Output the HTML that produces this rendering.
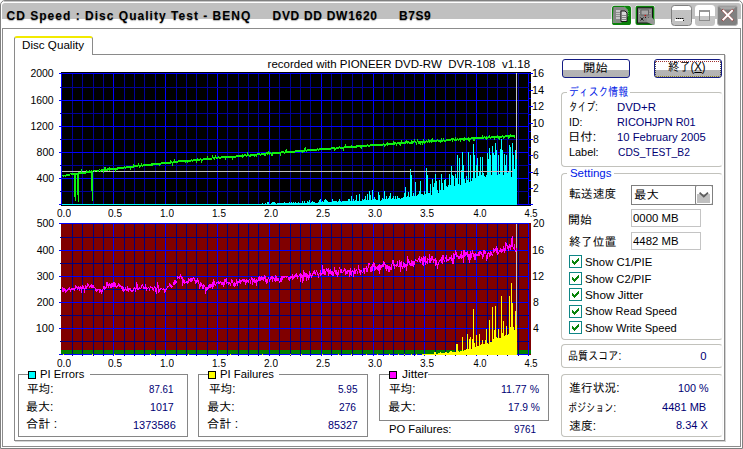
<!DOCTYPE html>
<html lang="ja"><head><meta charset="utf-8"><title>CD Speed : Disc Quality Test</title>
<style>
html,body{margin:0;padding:0;background:#fff;}
body{width:743px;height:449px;overflow:hidden;position:relative;font-family:"Liberation Sans","IPAGothic","Noto Sans CJK JP",sans-serif;font-size:11.5px;line-height:14px;color:#000;}
#win{position:absolute;left:0;top:0;width:741px;height:447px;border:1px solid #808080;border-radius:5px 5px 0 0;background:#fff;}
.abs,.t,.gb,.sb,.btn,.cb,.tb{position:absolute;box-sizing:content-box;}
.t{white-space:pre;height:14px;}
.t>span{display:inline-block;}
.ttl{text-shadow:0 1px 1px rgba(80,80,80,.45);}
#tbar{left:2px;top:3px;width:739px;height:16px;background:#c0c0c0;border-radius:3px 3px 0 0;}
#inner{left:2px;top:28px;width:737px;height:417px;border:1px solid #8c8c8c;}
#page{left:14px;top:54px;width:709px;height:385px;border:1px solid #8a8a8a;box-shadow:1px 1px 0 #d4d4d4;background:#fff;}
#tab{left:14px;top:36px;width:77px;height:17px;border:1px solid #8a8a8a;border-top:2px solid #f2ea00;border-bottom:none;border-radius:3px 3px 0 0;background:#fff;}
.gb{border:1px solid #c2c2bc;border-right-color:#f6f6f6;border-radius:4px;}
.sb{border:1px solid #868686;}
.lbg{background:#fff;}
.btn{border:1px solid #141c84;border-radius:3px;height:17px;width:66px;background:linear-gradient(#fff 0,#fff 58%,#b6b6b6 58%,#b2b2b2 100%);}
.tb{border:1px solid #c4c4c4;background:#fff;}
.cb{width:11px;height:11px;border:1px solid #0f8686;background:#fff;}
.sq{width:6px;height:6px;border:1px solid #000;}
.cj{-webkit-text-stroke:0.3px currentColor;}

</style></head>
<body>
<div id="win"></div>
<div class="abs" style="left:4px;top:1px;width:735px;height:1px;background:#c6c6c6"></div>
<div class="abs" id="tbar"></div>
<div class="abs" id="inner"></div>
<div class="abs" id="page"></div>
<div class="abs" id="tab"></div>

<!-- title bar icons -->
<svg class="abs" style="left:611px;top:5px" width="46" height="22" viewBox="0 0 46 22">
  <rect x="0.5" y="0.3" width="20" height="20.2" rx="3" fill="#fff"/>
  <rect x="1" y="0.8" width="19" height="19.2" rx="2.6" fill="#0a800a"/>
  <path d="M2.5 2h11.5l3 3v6.5l-7 6.5h-8.5z" fill="#868686"/>
  <path d="M3.2 15.5l2 1.8M13 1.6l3.5 3.4M17.2 6v5" stroke="#40e040" stroke-width="1" stroke-dasharray="1 1" fill="none"/>
  <rect x="5" y="5" width="4" height="9" fill="#c6c6c6"/>
  <path d="M5 7.5h4M5 9.5h4M5 11.5h4" stroke="#8a8a8a" stroke-width=".9"/>
  <path d="M10 6h4l2 2v8.5h-6z" fill="#d8d8d8" stroke="#181818" stroke-width="1"/>
  <path d="M11 10.5h4M11 12.5h4M11 14.5h4" stroke="#7a7a7a" stroke-width=".9"/>
  <rect x="24" y="0.3" width="20" height="20.2" rx="2.5" fill="#fff"/>
  <rect x="24.5" y="0.8" width="19" height="19.2" rx="2" fill="#0a800a"/>
  <rect x="26.5" y="2.8" width="15" height="15.2" fill="#888" stroke="#181818" stroke-width="1"/>
  <rect x="30" y="5" width="7.5" height="5" fill="#a6a6a6" stroke="#585858" stroke-width=".8"/>
  <path d="M28.5 5.5v5M39 5.5v5" stroke="#d8d8d8" stroke-width=".8" stroke-dasharray="1 1.5"/>
  <path d="M29.5 12.5l3 3M32.5 12.5l-3 3M34 12.5h1M37 12.5h1" stroke="#202020" stroke-width="1"/>
  <circle cx="34.3" cy="10.6" r=".8" fill="#d01010"/>
  <path d="M36.5 12.5h4.5l2.6 3v4.2l-1.6 .4-6.5-3.4z" fill="#989898"/>
</svg>
<!-- min / max / close -->
<div class="abs" style="left:671px;top:5px;width:19px;height:19px;border:1px solid #808080;border-radius:3.5px;background:linear-gradient(#fff 0,#fff 3.6px,#c2c2c2 3.6px,#c0c0c0 100%)"></div>
<div class="abs" style="left:676px;top:18px;width:8px;height:1px;background:repeating-linear-gradient(90deg,#111 0,#111 1px,#666 1px,#666 2px)"></div>
<div class="abs" style="left:675px;top:19px;width:8px;height:2px;background:#fff"></div>
<div class="abs" style="left:683px;top:20px;width:1px;height:1px;background:#111"></div>
<div class="abs" style="left:695px;top:5px;width:20px;height:21px;border-radius:3.5px;background:linear-gradient(#fff 0,#fff 10.6px,#c6c6c6 10.6px,#c4c4c4 100%)"></div>
<div class="abs" style="left:699px;top:10px;width:9px;height:8px;border:1px solid #8c8c8c;border-top:2px solid #989898;background:linear-gradient(#fff 0,#fff 3.6px,#c6c6c6 3.6px)"></div>
<div class="abs" style="left:717px;top:5px;width:19px;height:19px;border:1px solid #b2b2b2;border-radius:3px;background:#808080"></div>
<svg class="abs" style="left:717px;top:5px" width="21" height="21" viewBox="0 0 21 21"><path d="M1.5 1.2h18l-3.2 3.2h-11.6z" fill="#a8a8a8"/><path d="M5.2 4.6l11 11M16.2 4.6l-11 11" stroke="#8a1818" stroke-width="2.5"/><path d="M5.6 5l10.2 10.2M15.8 5l-10.2 10.2" stroke="#fff" stroke-width="2"/></svg>

<!-- buttons -->
<div class="btn" style="left:562px;top:59px"></div>
<div class="btn" style="left:654px;top:59px"></div>
<div class="abs" style="left:655px;top:61px;width:64px;height:14px;border:1px dotted #4a4a4a;border-top-color:#a03030;border-bottom-color:#8a8020"></div>

<!-- right group boxes -->
<div class="gb" style="left:561px;top:92px;width:160px;height:73px"></div>
<div class="abs lbg" style="left:567px;top:86px;width:63px;height:12px"></div>
<div class="gb" style="left:561px;top:173px;width:160px;height:165px"></div>
<div class="abs lbg" style="left:567px;top:168px;width:47px;height:11px"></div>
<div class="gb" style="left:561px;top:344px;width:160px;height:22px"></div>
<div class="gb" style="left:561px;top:374px;width:160px;height:61px"></div>

<!-- combo + text boxes -->
<div class="tb" style="left:631px;top:185px;width:80px;height:18px;border-color:#7f7f7f"></div>
<div class="abs" style="left:695px;top:185px;width:16px;height:18px;border:1px solid #808080;border-radius:2px;background:#fff"></div>
<div class="abs" style="left:697px;top:194px;width:13px;height:9px;background:#c0c0c0"></div>
<svg class="abs" style="left:695px;top:185px" width="18" height="20" viewBox="0 0 18 20"><path d="M4.6 7.6l4.2 4 4.2-4" fill="none" stroke="#5c5c5c" stroke-width="1.8"/></svg>
<div class="tb" style="left:631px;top:209px;width:68px;height:16px"></div>
<div class="tb" style="left:631px;top:232px;width:68px;height:16px"></div>

<!-- checkboxes -->
<div class="cb" style="left:569px;top:255px"></div>
<div class="cb" style="left:569px;top:272px"></div>
<div class="cb" style="left:569px;top:288px"></div>
<div class="cb" style="left:569px;top:305px"></div>
<div class="cb" style="left:569px;top:321px"></div>
<svg class="abs" style="left:569px;top:255px" width="13" height="80" viewBox="0 0 13 80" shape-rendering="crispEdges"><path d="M3 5h1v3h-1zM4 6h1v3h-1zM5 7h1v3h-1zM6 6h1v3h-1zM7 5h1v3h-1zM8 4h1v3h-1zM9 3h1v3h-1zM3 22h1v3h-1zM4 23h1v3h-1zM5 24h1v3h-1zM6 23h1v3h-1zM7 22h1v3h-1zM8 21h1v3h-1zM9 20h1v3h-1zM3 38h1v3h-1zM4 39h1v3h-1zM5 40h1v3h-1zM6 39h1v3h-1zM7 38h1v3h-1zM8 37h1v3h-1zM9 36h1v3h-1zM3 55h1v3h-1zM4 56h1v3h-1zM5 57h1v3h-1zM6 56h1v3h-1zM7 55h1v3h-1zM8 54h1v3h-1zM9 53h1v3h-1zM3 71h1v3h-1zM4 72h1v3h-1zM5 73h1v3h-1zM6 72h1v3h-1zM7 71h1v3h-1zM8 70h1v3h-1zM9 69h1v3h-1z" fill="#0a840a"/></svg>

<!-- bottom group boxes -->
<div class="sb" style="left:18px;top:374px;width:168px;height:61px"></div>
<div class="abs lbg" style="left:28px;top:368px;width:62px;height:12px"></div>
<div class="abs sq" style="left:28px;top:371px;background:#00ffff"></div>
<div class="sb" style="left:198px;top:374px;width:168px;height:61px"></div>
<div class="abs lbg" style="left:208px;top:368px;width:71px;height:12px"></div>
<div class="abs sq" style="left:208px;top:371px;background:#ffff00"></div>
<div class="sb" style="left:379px;top:374px;width:168px;height:45px"></div>
<div class="abs lbg" style="left:389px;top:368px;width:39px;height:12px"></div>
<div class="abs sq" style="left:389px;top:371px;background:#ff00ff"></div>

<svg class="abs" style="left:0;top:0" width="743" height="449" viewBox="0 0 743 449" shape-rendering="crispEdges">
<rect x="61" y="72" width="470" height="134" fill="#000"/>
<rect x="61" y="73" width="1" height="132" fill="#0000ff"/>
<rect x="72" y="73" width="1" height="132" fill="#000098"/>
<rect x="82" y="73" width="1" height="132" fill="#000098"/>
<rect x="93" y="73" width="1" height="132" fill="#000098"/>
<rect x="103" y="73" width="1" height="132" fill="#000098"/>
<rect x="113" y="73" width="1" height="132" fill="#0000ff"/>
<rect x="124" y="73" width="1" height="132" fill="#000098"/>
<rect x="134" y="73" width="1" height="132" fill="#000098"/>
<rect x="144" y="73" width="1" height="132" fill="#000098"/>
<rect x="155" y="73" width="1" height="132" fill="#000098"/>
<rect x="165" y="73" width="1" height="132" fill="#0000ff"/>
<rect x="176" y="73" width="1" height="132" fill="#000098"/>
<rect x="186" y="73" width="1" height="132" fill="#000098"/>
<rect x="196" y="73" width="1" height="132" fill="#000098"/>
<rect x="207" y="73" width="1" height="132" fill="#000098"/>
<rect x="217" y="73" width="1" height="132" fill="#0000ff"/>
<rect x="227" y="73" width="1" height="132" fill="#000098"/>
<rect x="238" y="73" width="1" height="132" fill="#000098"/>
<rect x="248" y="73" width="1" height="132" fill="#000098"/>
<rect x="258" y="73" width="1" height="132" fill="#000098"/>
<rect x="269" y="73" width="1" height="132" fill="#0000ff"/>
<rect x="279" y="73" width="1" height="132" fill="#000098"/>
<rect x="290" y="73" width="1" height="132" fill="#000098"/>
<rect x="300" y="73" width="1" height="132" fill="#000098"/>
<rect x="310" y="73" width="1" height="132" fill="#000098"/>
<rect x="321" y="73" width="1" height="132" fill="#0000ff"/>
<rect x="331" y="73" width="1" height="132" fill="#000098"/>
<rect x="341" y="73" width="1" height="132" fill="#000098"/>
<rect x="352" y="73" width="1" height="132" fill="#000098"/>
<rect x="362" y="73" width="1" height="132" fill="#000098"/>
<rect x="373" y="73" width="1" height="132" fill="#0000ff"/>
<rect x="383" y="73" width="1" height="132" fill="#000098"/>
<rect x="393" y="73" width="1" height="132" fill="#000098"/>
<rect x="404" y="73" width="1" height="132" fill="#000098"/>
<rect x="414" y="73" width="1" height="132" fill="#000098"/>
<rect x="424" y="73" width="1" height="132" fill="#0000ff"/>
<rect x="435" y="73" width="1" height="132" fill="#000098"/>
<rect x="445" y="73" width="1" height="132" fill="#000098"/>
<rect x="455" y="73" width="1" height="132" fill="#000098"/>
<rect x="466" y="73" width="1" height="132" fill="#000098"/>
<rect x="476" y="73" width="1" height="132" fill="#0000ff"/>
<rect x="487" y="73" width="1" height="132" fill="#000098"/>
<rect x="497" y="73" width="1" height="132" fill="#000098"/>
<rect x="507" y="73" width="1" height="132" fill="#000098"/>
<rect x="518" y="73" width="1" height="132" fill="#000098"/>
<rect x="528" y="73" width="1" height="132" fill="#0000ff"/>
<rect x="59" y="73" width="470" height="1" fill="#0000ff"/>
<rect x="60" y="87" width="469" height="1" fill="#000098"/>
<rect x="59" y="100" width="470" height="1" fill="#0000ff"/>
<rect x="60" y="113" width="469" height="1" fill="#000098"/>
<rect x="59" y="126" width="470" height="1" fill="#0000ff"/>
<rect x="60" y="139" width="469" height="1" fill="#000098"/>
<rect x="59" y="152" width="470" height="1" fill="#0000ff"/>
<rect x="60" y="165" width="469" height="1" fill="#000098"/>
<rect x="59" y="178" width="470" height="1" fill="#0000ff"/>
<rect x="60" y="191" width="469" height="1" fill="#000098"/>
<rect x="59" y="204" width="470" height="1" fill="#0000ff"/>
<rect x="529" y="73" width="4" height="1" fill="#0000ff"/>
<rect x="529" y="82" width="2" height="1" fill="#0000ff"/>
<rect x="529" y="90" width="4" height="1" fill="#0000ff"/>
<rect x="529" y="98" width="2" height="1" fill="#0000ff"/>
<rect x="529" y="106" width="4" height="1" fill="#0000ff"/>
<rect x="529" y="114" width="2" height="1" fill="#0000ff"/>
<rect x="529" y="123" width="4" height="1" fill="#0000ff"/>
<rect x="529" y="131" width="2" height="1" fill="#0000ff"/>
<rect x="529" y="139" width="4" height="1" fill="#0000ff"/>
<rect x="529" y="147" width="2" height="1" fill="#0000ff"/>
<rect x="529" y="155" width="4" height="1" fill="#0000ff"/>
<rect x="529" y="164" width="2" height="1" fill="#0000ff"/>
<rect x="529" y="172" width="4" height="1" fill="#0000ff"/>
<rect x="529" y="180" width="2" height="1" fill="#0000ff"/>
<rect x="529" y="188" width="4" height="1" fill="#0000ff"/>
<rect x="529" y="196" width="2" height="1" fill="#0000ff"/>
<rect x="529" y="204" width="4" height="1" fill="#0000ff"/>
<rect x="516" y="73" width="1" height="132" fill="#c0c0c0"/>
<path d="M62 204h200v1h-200zM262 203h1v2h-1zM263 204h2v1h-2zM265 203h1v2h-1zM266 204h1v1h-1zM267 202h2v3h-2zM269 204h2v1h-2zM271 203h1v2h-1zM272 202h3v3h-3zM275 203h1v2h-1zM276 204h1v1h-1zM277 203h7v2h-7zM284 202h1v3h-1zM285 203h4v2h-4zM289 202h1v3h-1zM290 203h1v2h-1zM291 202h1v3h-1zM292 203h1v2h-1zM293 202h1v3h-1zM294 203h1v2h-1zM295 202h1v3h-1zM296 203h2v2h-2zM298 202h1v3h-1zM299 203h3v2h-3zM302 201h1v4h-1zM303 203h1v2h-1zM304 201h1v4h-1zM305 203h2v2h-2zM307 201h1v4h-1zM308 202h1v3h-1zM309 200h1v5h-1zM310 203h1v2h-1zM311 202h1v3h-1zM312 201h1v4h-1zM313 202h2v3h-2zM315 203h3v2h-3zM318 202h1v3h-1zM319 200h1v5h-1zM320 199h1v6h-1zM321 202h1v3h-1zM322 201h1v4h-1zM323 202h1v3h-1zM324 200h1v5h-1zM325 199h1v6h-1zM326 200h1v5h-1zM327 201h1v4h-1zM328 202h4v3h-4zM332 199h1v6h-1zM333 201h4v4h-4zM337 202h1v3h-1zM338 201h1v4h-1zM339 199h1v6h-1zM340 201h1v4h-1zM341 202h1v3h-1zM342 201h6v4h-6zM348 199h2v6h-2zM350 201h1v4h-1zM351 196h1v9h-1zM352 201h1v4h-1zM353 199h1v6h-1zM354 201h1v4h-1zM355 200h1v5h-1zM356 195h1v10h-1zM357 201h2v4h-2zM359 194h1v11h-1zM360 201h2v4h-2zM362 199h1v6h-1zM363 200h1v5h-1zM364 199h1v6h-1zM365 196h1v9h-1zM366 200h1v5h-1zM367 194h1v11h-1zM368 200h1v5h-1zM369 191h1v14h-1zM370 195h1v10h-1zM371 200h1v5h-1zM372 190h1v15h-1zM373 199h1v6h-1zM374 197h1v8h-1zM375 199h1v6h-1zM376 200h2v5h-2zM378 192h1v13h-1zM379 195h1v10h-1zM380 201h1v4h-1zM381 200h1v5h-1zM382 198h1v7h-1zM383 199h1v6h-1zM384 191h1v14h-1zM385 199h1v6h-1zM386 196h1v9h-1zM387 199h1v6h-1zM388 198h1v7h-1zM389 196h1v9h-1zM390 193h1v12h-1zM391 199h1v6h-1zM392 198h1v7h-1zM393 196h1v9h-1zM394 199h1v6h-1zM395 196h1v9h-1zM396 199h1v6h-1zM397 196h1v9h-1zM398 198h2v7h-2zM400 199h1v6h-1zM401 198h2v7h-2zM403 197h1v8h-1zM404 193h1v12h-1zM405 187h1v18h-1zM406 197h1v8h-1zM407 196h1v9h-1zM408 192h1v13h-1zM409 197h1v8h-1zM410 169h1v36h-1zM411 175h1v30h-1zM412 196h1v9h-1zM413 193h1v12h-1zM414 196h1v9h-1zM415 182h1v23h-1zM416 196h1v9h-1zM417 195h1v10h-1zM418 194h1v11h-1zM419 191h1v14h-1zM420 181h1v24h-1zM421 194h2v11h-2zM423 195h1v10h-1zM424 191h1v14h-1zM425 194h1v11h-1zM426 168h1v37h-1zM427 175h1v30h-1zM428 193h2v12h-2zM430 184h1v21h-1zM431 195h1v10h-1zM432 179h1v26h-1zM433 187h1v18h-1zM434 183h1v22h-1zM435 174h1v31h-1zM436 181h1v24h-1zM437 190h1v15h-1zM438 193h1v12h-1zM439 180h1v25h-1zM440 190h1v15h-1zM441 174h1v31h-1zM442 183h1v22h-1zM443 190h1v15h-1zM444 180h1v25h-1zM445 179h1v26h-1zM446 186h1v19h-1zM447 187h1v18h-1zM448 185h1v20h-1zM449 174h1v31h-1zM450 185h1v20h-1zM451 166h1v39h-1zM452 175h1v30h-1zM453 176h1v29h-1zM454 186h1v19h-1zM455 174h1v31h-1zM456 178h1v27h-1zM457 155h1v50h-1zM458 184h1v21h-1zM459 158h1v47h-1zM460 185h1v20h-1zM461 170h1v35h-1zM462 152h1v53h-1zM463 165h1v40h-1zM464 179h1v26h-1zM465 183h1v22h-1zM466 176h1v29h-1zM467 180h1v25h-1zM468 152h1v53h-1zM469 182h1v23h-1zM470 155h1v50h-1zM471 181h1v24h-1zM472 178h1v27h-1zM473 144h1v61h-1zM474 155h1v50h-1zM475 178h1v27h-1zM476 165h1v40h-1zM477 158h1v47h-1zM478 176h1v29h-1zM479 171h1v34h-1zM480 157h1v48h-1zM481 175h1v30h-1zM482 157h1v48h-1zM483 173h1v32h-1zM484 176h1v29h-1zM485 177h1v28h-1zM486 175h1v30h-1zM487 153h1v52h-1zM488 159h1v46h-1zM489 148h1v57h-1zM490 155h1v50h-1zM491 175h1v30h-1zM492 146h1v59h-1zM493 153h1v52h-1zM494 155h1v50h-1zM495 143h1v62h-1zM496 150h1v55h-1zM497 175h1v30h-1zM498 155h1v50h-1zM499 174h1v31h-1zM500 149h1v56h-1zM501 139h1v66h-1zM502 150h1v55h-1zM503 175h1v30h-1zM504 154h1v51h-1zM505 165h1v40h-1zM506 155h1v50h-1zM507 173h1v32h-1zM508 172h1v33h-1zM509 145h1v60h-1zM510 147h1v58h-1zM511 177h1v28h-1zM512 143h1v62h-1zM513 155h1v50h-1zM514 169h1v36h-1zM515 150h1v55h-1zM516 159h1v46h-1z" fill="#00ffff"/>
<rect x="62" y="171" width="451" height="1" fill="#c0c0c0"/>
<path d="M62 175h1v1h-1zM63 175h1v2h-1zM64 175h1v1h-1zM65 175h1v2h-1zM66 174h1v2h-1zM67 174h1v2h-1zM68 174h1v2h-1zM69 174h1v2h-1zM70 173h1v1h-1zM71 173h1v2h-1zM72 173h1v2h-1zM73 173h1v2h-1zM74 173h1v2h-1zM75 173h1v2h-1zM76 173h1v2h-1zM77 173h1v2h-1zM78 172h1v2h-1zM79 172h1v2h-1zM80 172h1v2h-1zM81 172h1v2h-1zM82 172h1v2h-1zM83 172h1v2h-1zM84 172h1v2h-1zM85 172h1v2h-1zM86 171h1v2h-1zM87 171h1v2h-1zM88 171h1v2h-1zM89 171h1v2h-1zM90 171h1v2h-1zM91 170h1v1h-1zM92 171h1v1h-1zM93 170h1v1h-1zM94 170h1v2h-1zM95 170h1v1h-1zM96 170h1v1h-1zM97 170h1v2h-1zM98 170h1v2h-1zM99 169h1v1h-1zM100 170h1v2h-1zM101 169h1v2h-1zM102 169h1v2h-1zM103 169h1v4h-1zM104 167h1v4h-1zM105 167h1v4h-1zM106 169h1v2h-1zM107 168h1v3h-1zM108 168h1v2h-1zM109 167h1v4h-1zM110 168h1v2h-1zM111 168h1v2h-1zM112 168h1v2h-1zM113 168h1v2h-1zM114 168h1v2h-1zM115 168h1v4h-1zM116 168h1v2h-1zM117 167h1v3h-1zM118 167h1v2h-1zM119 167h1v2h-1zM120 167h1v2h-1zM121 167h1v2h-1zM122 167h1v2h-1zM123 167h1v2h-1zM124 166h1v2h-1zM125 167h1v2h-1zM126 166h1v2h-1zM127 166h1v2h-1zM128 166h1v2h-1zM129 166h1v2h-1zM130 166h1v4h-1zM131 166h1v2h-1zM132 166h1v2h-1zM133 164h1v4h-1zM134 165h1v2h-1zM135 165h1v2h-1zM136 165h1v2h-1zM137 165h1v2h-1zM138 163h1v3h-1zM139 165h1v3h-1zM140 165h1v2h-1zM141 163h1v3h-1zM142 165h1v2h-1zM143 164h1v2h-1zM144 164h1v2h-1zM145 164h1v2h-1zM146 164h1v2h-1zM147 164h1v2h-1zM148 164h1v2h-1zM149 164h1v2h-1zM150 164h1v2h-1zM151 163h1v3h-1zM152 163h1v3h-1zM153 163h1v2h-1zM154 163h1v2h-1zM155 163h1v2h-1zM156 163h1v2h-1zM157 163h1v2h-1zM158 163h1v2h-1zM159 163h1v3h-1zM160 163h1v2h-1zM161 162h1v2h-1zM162 162h1v2h-1zM163 162h1v2h-1zM164 162h1v2h-1zM165 162h1v2h-1zM166 162h1v2h-1zM167 162h1v2h-1zM168 162h1v2h-1zM169 162h1v2h-1zM170 160h1v4h-1zM171 161h1v2h-1zM172 162h1v4h-1zM173 161h1v2h-1zM174 159h1v4h-1zM175 161h1v2h-1zM176 161h1v2h-1zM177 161h1v2h-1zM178 160h1v2h-1zM179 160h1v2h-1zM180 160h1v2h-1zM181 160h1v2h-1zM182 160h1v2h-1zM183 160h1v2h-1zM184 160h1v2h-1zM185 160h1v3h-1zM186 160h1v2h-1zM187 160h1v3h-1zM188 160h1v2h-1zM189 160h1v2h-1zM190 160h1v2h-1zM191 159h1v2h-1zM192 160h1v2h-1zM193 159h1v2h-1zM194 159h1v2h-1zM195 159h1v2h-1zM196 159h1v4h-1zM197 158h1v3h-1zM198 159h1v2h-1zM199 159h1v2h-1zM200 158h1v2h-1zM201 159h1v4h-1zM202 159h1v2h-1zM203 158h1v2h-1zM204 158h1v2h-1zM205 158h1v2h-1zM206 158h1v2h-1zM207 156h1v4h-1zM208 158h1v2h-1zM209 158h1v2h-1zM210 158h1v2h-1zM211 158h1v2h-1zM212 155h1v3h-1zM213 157h1v2h-1zM214 157h1v3h-1zM215 155h1v3h-1zM216 157h1v2h-1zM217 157h1v2h-1zM218 156h1v2h-1zM219 157h1v2h-1zM220 157h1v2h-1zM221 156h1v2h-1zM222 156h1v2h-1zM223 156h1v2h-1zM224 156h1v2h-1zM225 156h1v4h-1zM226 156h1v2h-1zM227 156h1v2h-1zM228 156h1v2h-1zM229 156h1v2h-1zM230 156h1v2h-1zM231 156h1v2h-1zM232 156h1v4h-1zM233 156h1v2h-1zM234 156h1v2h-1zM235 156h1v2h-1zM236 155h1v2h-1zM237 155h1v2h-1zM238 155h1v2h-1zM239 155h1v2h-1zM240 155h1v2h-1zM241 155h1v2h-1zM242 154h1v4h-1zM243 155h1v2h-1zM244 154h1v2h-1zM245 154h1v2h-1zM246 155h1v2h-1zM247 152h1v4h-1zM248 154h1v2h-1zM249 155h1v2h-1zM250 154h1v3h-1zM251 154h1v2h-1zM252 154h1v2h-1zM253 154h1v2h-1zM254 154h1v3h-1zM255 154h1v2h-1zM256 154h1v3h-1zM257 153h1v2h-1zM258 153h1v2h-1zM259 153h1v2h-1zM260 154h1v2h-1zM261 153h1v2h-1zM262 153h1v2h-1zM263 153h1v2h-1zM264 153h1v3h-1zM265 153h1v3h-1zM266 152h1v2h-1zM267 152h1v3h-1zM268 151h1v3h-1zM269 152h1v3h-1zM270 152h1v2h-1zM271 153h1v3h-1zM272 152h1v4h-1zM273 152h1v2h-1zM274 152h1v2h-1zM275 152h1v2h-1zM276 152h1v2h-1zM277 152h1v2h-1zM278 152h1v2h-1zM279 152h1v2h-1zM280 152h1v4h-1zM281 151h1v2h-1zM282 151h1v2h-1zM283 151h1v2h-1zM284 152h1v2h-1zM285 150h1v3h-1zM286 149h1v4h-1zM287 151h1v2h-1zM288 151h1v2h-1zM289 151h1v2h-1zM290 151h1v2h-1zM291 151h1v2h-1zM292 151h1v2h-1zM293 151h1v2h-1zM294 151h1v2h-1zM295 150h1v2h-1zM296 150h1v2h-1zM297 150h1v2h-1zM298 150h1v2h-1zM299 150h1v2h-1zM300 150h1v2h-1zM301 150h1v2h-1zM302 150h1v3h-1zM303 150h1v2h-1zM304 148h1v4h-1zM305 147h1v4h-1zM306 150h1v2h-1zM307 149h1v2h-1zM308 149h1v2h-1zM309 149h1v2h-1zM310 149h1v2h-1zM311 149h1v2h-1zM312 149h1v2h-1zM313 149h1v2h-1zM314 149h1v2h-1zM315 149h1v2h-1zM316 149h1v2h-1zM317 148h1v2h-1zM318 149h1v2h-1zM319 148h1v2h-1zM320 148h1v2h-1zM321 148h1v2h-1zM322 148h1v2h-1zM323 148h1v2h-1zM324 148h1v2h-1zM325 148h1v2h-1zM326 148h1v2h-1zM327 148h1v2h-1zM328 148h1v2h-1zM329 148h1v2h-1zM330 148h1v2h-1zM331 147h1v2h-1zM332 147h1v2h-1zM333 147h1v2h-1zM334 147h1v4h-1zM335 148h1v2h-1zM336 147h1v2h-1zM337 147h1v2h-1zM338 147h1v2h-1zM339 146h1v2h-1zM340 147h1v2h-1zM341 147h1v2h-1zM342 147h1v2h-1zM343 147h1v4h-1zM344 146h1v2h-1zM345 144h1v4h-1zM346 146h1v2h-1zM347 146h1v2h-1zM348 146h1v2h-1zM349 146h1v2h-1zM350 146h1v2h-1zM351 145h1v3h-1zM352 146h1v2h-1zM353 146h1v2h-1zM354 146h1v2h-1zM355 146h1v2h-1zM356 145h1v3h-1zM357 145h1v2h-1zM358 145h1v2h-1zM359 145h1v2h-1zM360 145h1v3h-1zM361 145h1v4h-1zM362 145h1v2h-1zM363 145h1v2h-1zM364 145h1v2h-1zM365 145h1v2h-1zM366 145h1v2h-1zM367 144h1v2h-1zM368 145h1v2h-1zM369 145h1v2h-1zM370 144h1v2h-1zM371 144h1v2h-1zM372 144h1v2h-1zM373 144h1v2h-1zM374 144h1v2h-1zM375 144h1v2h-1zM376 144h1v2h-1zM377 144h1v2h-1zM378 144h1v2h-1zM379 144h1v2h-1zM380 144h1v2h-1zM381 144h1v2h-1zM382 144h1v2h-1zM383 143h1v2h-1zM384 144h1v3h-1zM385 144h1v2h-1zM386 143h1v2h-1zM387 142h1v4h-1zM388 143h1v2h-1zM389 143h1v2h-1zM390 143h1v2h-1zM391 143h1v2h-1zM392 143h1v2h-1zM393 141h1v4h-1zM394 142h1v3h-1zM395 142h1v2h-1zM396 143h1v3h-1zM397 142h1v2h-1zM398 142h1v2h-1zM399 142h1v3h-1zM400 142h1v4h-1zM401 140h1v4h-1zM402 142h1v2h-1zM403 142h1v2h-1zM404 142h1v2h-1zM405 141h1v3h-1zM406 140h1v3h-1zM407 141h1v3h-1zM408 141h1v2h-1zM409 142h1v2h-1zM410 142h1v2h-1zM411 140h1v4h-1zM412 141h1v3h-1zM413 141h1v2h-1zM414 139h1v3h-1zM415 141h1v2h-1zM416 142h1v3h-1zM417 139h1v3h-1zM418 141h1v3h-1zM419 141h1v3h-1zM420 141h1v4h-1zM421 141h1v2h-1zM422 141h1v4h-1zM423 139h1v4h-1zM424 141h1v3h-1zM425 141h1v2h-1zM426 140h1v2h-1zM427 141h1v2h-1zM428 139h1v3h-1zM429 140h1v3h-1zM430 140h1v2h-1zM431 139h1v4h-1zM432 138h1v4h-1zM433 140h1v2h-1zM434 140h1v2h-1zM435 140h1v2h-1zM436 140h1v2h-1zM437 139h1v2h-1zM438 140h1v2h-1zM439 140h1v2h-1zM440 140h1v3h-1zM441 138h1v4h-1zM442 140h1v2h-1zM443 138h1v3h-1zM444 140h1v2h-1zM445 140h1v2h-1zM446 139h1v2h-1zM447 139h1v2h-1zM448 139h1v2h-1zM449 139h1v2h-1zM450 139h1v2h-1zM451 138h1v2h-1zM452 138h1v4h-1zM453 138h1v2h-1zM454 139h1v2h-1zM455 137h1v4h-1zM456 139h1v2h-1zM457 138h1v2h-1zM458 139h1v2h-1zM459 138h1v2h-1zM460 138h1v4h-1zM461 138h1v2h-1zM462 138h1v2h-1zM463 138h1v3h-1zM464 137h1v4h-1zM465 138h1v2h-1zM466 138h1v2h-1zM467 138h1v2h-1zM468 137h1v4h-1zM469 138h1v4h-1zM470 138h1v2h-1zM471 137h1v2h-1zM472 137h1v2h-1zM473 137h1v4h-1zM474 137h1v4h-1zM475 137h1v2h-1zM476 137h1v2h-1zM477 137h1v2h-1zM478 137h1v2h-1zM479 137h1v2h-1zM480 137h1v2h-1zM481 137h1v2h-1zM482 135h1v4h-1zM483 137h1v2h-1zM484 136h1v2h-1zM485 137h1v2h-1zM486 136h1v4h-1zM487 137h1v2h-1zM488 136h1v2h-1zM489 135h1v3h-1zM490 137h1v2h-1zM491 136h1v2h-1zM492 136h1v2h-1zM493 136h1v2h-1zM494 136h1v4h-1zM495 136h1v2h-1zM496 136h1v2h-1zM497 135h1v3h-1zM498 136h1v3h-1zM499 136h1v4h-1zM500 136h1v2h-1zM501 136h1v2h-1zM502 135h1v2h-1zM503 136h1v3h-1zM504 136h1v2h-1zM505 135h1v2h-1zM506 135h1v2h-1zM507 135h1v2h-1zM508 135h1v4h-1zM509 135h1v3h-1zM510 134h1v3h-1zM511 135h1v2h-1zM512 135h1v2h-1zM513 135h1v2h-1zM514 135h1v3h-1zM74 174h1v23h-1zM75 174h1v27h-1zM77 174h1v21h-1zM78 173h1v29h-1zM91 171h1v20h-1zM92 172h1v29h-1zM81 169h1v5h-1zM86 170h1v3h-1zM89 170h1v3h-1z" fill="#10f010"/>
<rect x="61" y="223" width="470" height="132" fill="#800000"/>
<rect x="61" y="350" width="470" height="4" fill="#008000"/>
<rect x="72" y="223" width="1" height="133" fill="#000080"/>
<rect x="82" y="223" width="1" height="133" fill="#000080"/>
<rect x="93" y="223" width="1" height="133" fill="#000080"/>
<rect x="103" y="223" width="1" height="133" fill="#000080"/>
<rect x="113" y="223" width="1" height="133" fill="#0000ff"/>
<rect x="124" y="223" width="1" height="133" fill="#000080"/>
<rect x="134" y="223" width="1" height="133" fill="#000080"/>
<rect x="144" y="223" width="1" height="133" fill="#000080"/>
<rect x="155" y="223" width="1" height="133" fill="#000080"/>
<rect x="165" y="223" width="1" height="133" fill="#0000ff"/>
<rect x="176" y="223" width="1" height="133" fill="#000080"/>
<rect x="186" y="223" width="1" height="133" fill="#000080"/>
<rect x="196" y="223" width="1" height="133" fill="#000080"/>
<rect x="207" y="223" width="1" height="133" fill="#000080"/>
<rect x="217" y="223" width="1" height="133" fill="#0000ff"/>
<rect x="227" y="223" width="1" height="133" fill="#000080"/>
<rect x="238" y="223" width="1" height="133" fill="#000080"/>
<rect x="248" y="223" width="1" height="133" fill="#000080"/>
<rect x="258" y="223" width="1" height="133" fill="#000080"/>
<rect x="269" y="223" width="1" height="133" fill="#0000ff"/>
<rect x="279" y="223" width="1" height="133" fill="#000080"/>
<rect x="290" y="223" width="1" height="133" fill="#000080"/>
<rect x="300" y="223" width="1" height="133" fill="#000080"/>
<rect x="310" y="223" width="1" height="133" fill="#000080"/>
<rect x="321" y="223" width="1" height="133" fill="#0000ff"/>
<rect x="331" y="223" width="1" height="133" fill="#000080"/>
<rect x="341" y="223" width="1" height="133" fill="#000080"/>
<rect x="352" y="223" width="1" height="133" fill="#000080"/>
<rect x="362" y="223" width="1" height="133" fill="#000080"/>
<rect x="373" y="223" width="1" height="133" fill="#0000ff"/>
<rect x="383" y="223" width="1" height="133" fill="#000080"/>
<rect x="393" y="223" width="1" height="133" fill="#000080"/>
<rect x="404" y="223" width="1" height="133" fill="#000080"/>
<rect x="414" y="223" width="1" height="133" fill="#000080"/>
<rect x="424" y="223" width="1" height="133" fill="#0000ff"/>
<rect x="435" y="223" width="1" height="133" fill="#000080"/>
<rect x="445" y="223" width="1" height="133" fill="#000080"/>
<rect x="455" y="223" width="1" height="133" fill="#000080"/>
<rect x="466" y="223" width="1" height="133" fill="#000080"/>
<rect x="476" y="223" width="1" height="133" fill="#0000ff"/>
<rect x="487" y="223" width="1" height="133" fill="#000080"/>
<rect x="497" y="223" width="1" height="133" fill="#000080"/>
<rect x="507" y="223" width="1" height="133" fill="#000080"/>
<rect x="518" y="223" width="1" height="133" fill="#000080"/>
<rect x="528" y="223" width="1" height="133" fill="#0000ff"/>
<rect x="59" y="223" width="470" height="1" fill="#0000ff"/>
<rect x="60" y="237" width="469" height="1" fill="#000080"/>
<rect x="59" y="250" width="470" height="1" fill="#0000ff"/>
<rect x="60" y="263" width="469" height="1" fill="#000080"/>
<rect x="59" y="276" width="470" height="1" fill="#0000ff"/>
<rect x="60" y="289" width="469" height="1" fill="#000080"/>
<rect x="59" y="302" width="470" height="1" fill="#0000ff"/>
<rect x="60" y="315" width="469" height="1" fill="#000080"/>
<rect x="59" y="328" width="470" height="1" fill="#0000ff"/>
<rect x="60" y="341" width="469" height="1" fill="#000080"/>
<rect x="59" y="354" width="470" height="1" fill="#0000ff"/>
<rect x="516" y="224" width="1" height="130" fill="#c0c0c0"/>
<path d="M422 354h12v1h-12zM434 352h2v3h-2zM436 354h2v1h-2zM438 353h2v2h-2zM440 352h1v3h-1zM441 353h4v2h-4zM445 352h2v3h-2zM447 353h2v2h-2zM449 352h1v3h-1zM450 351h2v4h-2zM452 352h4v3h-4zM456 344h2v11h-2zM458 351h1v4h-1zM459 352h1v3h-1zM460 351h2v4h-2zM462 337h1v18h-1zM463 351h1v4h-1zM464 350h2v5h-2zM466 349h1v6h-1zM467 334h1v21h-1zM468 349h1v6h-1zM469 339h1v16h-1zM470 337h1v18h-1zM471 349h1v6h-1zM472 339h1v16h-1zM473 309h1v46h-1zM474 343h1v12h-1zM475 347h1v8h-1zM476 335h1v20h-1zM477 346h2v9h-2zM479 334h1v21h-1zM480 345h1v10h-1zM481 344h1v11h-1zM482 340h1v15h-1zM483 344h2v11h-2zM485 340h1v15h-1zM486 329h1v26h-1zM487 343h1v12h-1zM488 344h1v11h-1zM489 320h1v35h-1zM490 342h2v13h-2zM492 307h1v48h-1zM493 339h1v16h-1zM494 330h1v25h-1zM495 306h1v49h-1zM496 337h1v18h-1zM497 338h1v17h-1zM498 329h1v26h-1zM499 338h2v17h-2zM501 296h1v59h-1zM502 333h1v22h-1zM503 321h1v34h-1zM504 336h1v19h-1zM505 335h1v20h-1zM506 326h1v29h-1zM507 335h1v20h-1zM508 334h1v21h-1zM509 296h1v59h-1zM510 327h1v28h-1zM511 283h1v72h-1zM512 303h1v52h-1zM513 327h1v28h-1zM514 330h1v25h-1zM515 311h1v44h-1zM516 325h1v30h-1z" fill="#ffff00"/>
<rect x="63" y="354" width="1" height="1" fill="#ffff00"/>
<rect x="92" y="354" width="1" height="1" fill="#ffff00"/>
<rect x="114" y="354" width="1" height="1" fill="#ffff00"/>
<rect x="150" y="354" width="1" height="1" fill="#ffff00"/>
<rect x="188" y="354" width="1" height="1" fill="#ffff00"/>
<rect x="230" y="354" width="1" height="1" fill="#ffff00"/>
<rect x="262" y="354" width="1" height="1" fill="#ffff00"/>
<rect x="290" y="354" width="1" height="1" fill="#ffff00"/>
<rect x="301" y="354" width="1" height="1" fill="#ffff00"/>
<rect x="322" y="354" width="1" height="1" fill="#ffff00"/>
<rect x="338" y="354" width="1" height="1" fill="#ffff00"/>
<rect x="351" y="354" width="1" height="1" fill="#ffff00"/>
<rect x="366" y="354" width="1" height="1" fill="#ffff00"/>
<rect x="377" y="354" width="1" height="1" fill="#ffff00"/>
<rect x="389" y="354" width="1" height="1" fill="#ffff00"/>
<rect x="398" y="354" width="1" height="1" fill="#ffff00"/>
<rect x="404" y="354" width="1" height="1" fill="#ffff00"/>
<rect x="411" y="354" width="1" height="1" fill="#ffff00"/>
<rect x="416" y="354" width="1" height="1" fill="#ffff00"/>
<path d="M62 287h1v5h-1zM63 288h1v4h-1zM64 288h1v3h-1zM65 289h1v4h-1zM66 290h1v2h-1zM67 289h1v2h-1zM68 288h1v2h-1zM69 287h1v3h-1zM70 289h1v3h-1zM71 288h1v2h-1zM72 288h1v2h-1zM73 288h1v2h-1zM74 288h1v3h-1zM75 285h1v4h-1zM76 286h1v2h-1zM77 287h1v3h-1zM78 286h1v3h-1zM79 287h1v4h-1zM80 286h1v3h-1zM81 287h1v6h-1zM82 285h1v4h-1zM83 286h1v3h-1zM84 288h1v5h-1zM85 285h1v4h-1zM86 286h1v3h-1zM87 283h1v4h-1zM88 284h1v2h-1zM89 286h1v2h-1zM90 285h1v2h-1zM91 284h1v4h-1zM92 285h1v3h-1zM93 285h1v3h-1zM94 287h1v1h-1zM95 288h1v3h-1zM96 289h1v3h-1zM97 289h1v2h-1zM98 289h1v1h-1zM99 289h1v4h-1zM100 289h1v3h-1zM101 290h1v4h-1zM102 289h1v3h-1zM103 286h1v3h-1zM104 286h1v4h-1zM105 287h1v2h-1zM106 282h1v6h-1zM107 282h1v4h-1zM108 284h1v4h-1zM109 283h1v3h-1zM110 284h1v4h-1zM111 283h1v5h-1zM112 283h1v4h-1zM113 282h1v5h-1zM114 282h1v5h-1zM115 283h1v4h-1zM116 286h1v2h-1zM117 285h1v2h-1zM118 283h1v3h-1zM119 284h1v3h-1zM120 285h1v2h-1zM121 286h1v3h-1zM122 286h1v5h-1zM123 287h1v5h-1zM124 289h1v2h-1zM125 287h1v3h-1zM126 289h1v2h-1zM127 286h1v5h-1zM128 288h1v4h-1zM129 288h1v2h-1zM130 288h1v3h-1zM131 290h1v2h-1zM132 290h1v2h-1zM133 288h1v3h-1zM134 287h1v2h-1zM135 288h1v4h-1zM136 282h1v7h-1zM137 284h1v6h-1zM138 288h1v2h-1zM139 287h1v2h-1zM140 288h1v1h-1zM141 285h1v3h-1zM142 284h1v2h-1zM143 286h1v3h-1zM144 287h1v2h-1zM145 284h1v5h-1zM146 287h1v4h-1zM147 288h1v1h-1zM148 287h1v1h-1zM149 288h1v3h-1zM150 286h1v2h-1zM151 287h1v1h-1zM152 287h1v3h-1zM153 288h1v3h-1zM154 286h1v2h-1zM155 287h1v5h-1zM156 288h1v6h-1zM157 282h1v6h-1zM158 285h1v8h-1zM159 289h1v3h-1zM160 288h1v2h-1zM161 288h1v1h-1zM162 289h1v1h-1zM163 288h1v2h-1zM164 289h1v4h-1zM165 289h1v3h-1zM166 288h1v2h-1zM167 286h1v2h-1zM168 286h1v1h-1zM169 283h1v3h-1zM170 284h1v3h-1zM171 285h1v3h-1zM172 286h1v1h-1zM173 282h1v3h-1zM174 280h1v5h-1zM175 280h1v4h-1zM176 281h1v2h-1zM177 276h1v3h-1zM178 277h1v1h-1zM179 276h1v3h-1zM180 274h1v3h-1zM181 276h1v3h-1zM182 277h1v9h-1zM183 279h1v4h-1zM184 280h1v4h-1zM185 282h1v1h-1zM186 281h1v2h-1zM187 281h1v3h-1zM188 278h1v5h-1zM189 279h1v2h-1zM190 278h1v4h-1zM191 278h1v4h-1zM192 278h1v3h-1zM193 277h1v2h-1zM194 278h1v3h-1zM195 280h1v4h-1zM196 280h1v3h-1zM197 278h1v4h-1zM198 280h1v4h-1zM199 284h1v5h-1zM200 282h1v5h-1zM201 283h1v3h-1zM202 285h1v4h-1zM203 284h1v5h-1zM204 285h1v2h-1zM205 287h1v7h-1zM206 287h1v4h-1zM207 287h1v3h-1zM208 285h1v4h-1zM209 284h1v4h-1zM210 284h1v4h-1zM211 284h1v3h-1zM212 282h1v7h-1zM213 279h1v8h-1zM214 281h1v4h-1zM215 284h1v2h-1zM216 282h1v2h-1zM217 282h1v1h-1zM218 281h1v3h-1zM219 282h1v2h-1zM220 281h1v2h-1zM221 282h1v3h-1zM222 282h1v3h-1zM223 282h1v5h-1zM224 279h1v6h-1zM225 279h1v3h-1zM226 278h1v6h-1zM227 282h1v1h-1zM228 282h1v3h-1zM229 282h1v2h-1zM230 283h1v3h-1zM231 279h1v4h-1zM232 280h1v3h-1zM233 283h1v3h-1zM234 282h1v5h-1zM235 283h1v3h-1zM236 279h1v5h-1zM237 281h1v5h-1zM238 281h1v2h-1zM239 279h1v4h-1zM240 280h1v4h-1zM241 280h1v2h-1zM242 279h1v2h-1zM243 279h1v3h-1zM244 279h1v3h-1zM245 280h1v5h-1zM246 279h1v4h-1zM247 280h1v2h-1zM248 280h1v3h-1zM249 279h1v1h-1zM250 280h1v4h-1zM251 277h1v3h-1zM252 278h1v7h-1zM253 279h1v3h-1zM254 278h1v5h-1zM255 280h1v3h-1zM256 279h1v7h-1zM257 280h1v2h-1zM258 277h1v4h-1zM259 276h1v5h-1zM260 277h1v4h-1zM261 276h1v4h-1zM262 277h1v3h-1zM263 277h1v4h-1zM264 275h1v4h-1zM265 276h1v6h-1zM266 279h1v5h-1zM267 279h1v4h-1zM268 277h1v2h-1zM269 279h1v3h-1zM270 277h1v3h-1zM271 276h1v3h-1zM272 276h1v6h-1zM273 277h1v2h-1zM274 278h1v3h-1zM275 275h1v7h-1zM276 276h1v5h-1zM277 278h1v3h-1zM278 278h1v3h-1zM279 281h1v2h-1zM280 278h1v4h-1zM281 276h1v6h-1zM282 276h1v4h-1zM283 276h1v2h-1zM284 276h1v2h-1zM285 276h1v1h-1zM286 276h1v2h-1zM287 276h1v1h-1zM288 277h1v3h-1zM289 277h1v4h-1zM290 276h1v3h-1zM291 276h1v2h-1zM292 274h1v6h-1zM293 276h1v3h-1zM294 275h1v3h-1zM295 274h1v3h-1zM296 273h1v4h-1zM297 275h1v4h-1zM298 276h1v1h-1zM299 274h1v2h-1zM300 273h1v9h-1zM301 274h1v4h-1zM302 275h1v8h-1zM303 270h1v11h-1zM304 272h1v5h-1zM305 273h1v4h-1zM306 273h1v8h-1zM307 274h1v4h-1zM308 275h1v5h-1zM309 271h1v7h-1zM310 273h1v3h-1zM311 275h1v3h-1zM312 273h1v3h-1zM313 271h1v3h-1zM314 270h1v4h-1zM315 272h1v3h-1zM316 270h1v2h-1zM317 272h1v3h-1zM318 274h1v4h-1zM319 273h1v1h-1zM320 270h1v6h-1zM321 273h1v2h-1zM322 265h1v9h-1zM323 269h1v5h-1zM324 269h1v6h-1zM325 271h1v4h-1zM326 268h1v3h-1zM327 269h1v3h-1zM328 268h1v8h-1zM329 270h1v4h-1zM330 269h1v5h-1zM331 271h1v4h-1zM332 271h1v5h-1zM333 272h1v4h-1zM334 267h1v5h-1zM335 270h1v4h-1zM336 270h1v5h-1zM337 272h1v5h-1zM338 270h1v5h-1zM339 267h1v2h-1zM340 269h1v4h-1zM341 269h1v4h-1zM342 272h1v1h-1zM343 270h1v2h-1zM344 268h1v3h-1zM345 269h1v6h-1zM346 271h1v3h-1zM347 270h1v4h-1zM348 270h1v2h-1zM349 270h1v7h-1zM350 268h1v7h-1zM351 271h1v5h-1zM352 270h1v2h-1zM353 271h1v6h-1zM354 268h1v6h-1zM355 270h1v4h-1zM356 269h1v2h-1zM357 271h1v3h-1zM358 265h1v5h-1zM359 269h1v4h-1zM360 270h1v5h-1zM361 270h1v2h-1zM362 272h1v1h-1zM363 268h1v4h-1zM364 268h1v6h-1zM365 268h1v1h-1zM366 266h1v6h-1zM367 268h1v4h-1zM368 263h1v5h-1zM369 263h1v2h-1zM370 267h1v5h-1zM371 266h1v6h-1zM372 264h1v7h-1zM373 262h1v5h-1zM374 263h1v8h-1zM375 266h1v4h-1zM376 267h1v2h-1zM377 266h1v4h-1zM378 265h1v6h-1zM379 264h1v10h-1zM380 265h1v5h-1zM381 265h1v3h-1zM382 264h1v3h-1zM383 261h1v6h-1zM384 262h1v3h-1zM385 264h1v5h-1zM386 265h1v6h-1zM387 265h1v4h-1zM388 266h1v6h-1zM389 266h1v6h-1zM390 267h1v3h-1zM391 264h1v6h-1zM392 260h1v4h-1zM393 260h1v6h-1zM394 264h1v5h-1zM395 265h1v1h-1zM396 264h1v3h-1zM397 261h1v5h-1zM398 266h1v1h-1zM399 260h1v7h-1zM400 262h1v10h-1zM401 261h1v6h-1zM402 266h1v3h-1zM403 262h1v5h-1zM404 263h1v5h-1zM405 264h1v3h-1zM406 264h1v7h-1zM407 256h1v10h-1zM408 259h1v4h-1zM409 261h1v4h-1zM410 263h1v3h-1zM411 260h1v6h-1zM412 261h1v5h-1zM413 261h1v6h-1zM414 261h1v4h-1zM415 259h1v2h-1zM416 260h1v1h-1zM417 260h1v2h-1zM418 258h1v2h-1zM419 256h1v6h-1zM420 259h1v4h-1zM421 257h1v4h-1zM422 258h1v7h-1zM423 256h1v10h-1zM424 257h1v5h-1zM425 256h1v9h-1zM426 261h1v2h-1zM427 258h1v6h-1zM428 259h1v1h-1zM429 254h1v9h-1zM430 258h1v5h-1zM431 256h1v5h-1zM432 256h1v4h-1zM433 259h1v4h-1zM434 259h1v2h-1zM435 258h1v8h-1zM436 260h1v5h-1zM437 264h1v5h-1zM438 262h1v3h-1zM439 260h1v2h-1zM440 259h1v2h-1zM441 257h1v6h-1zM442 255h1v9h-1zM443 255h1v5h-1zM444 260h1v2h-1zM445 257h1v2h-1zM446 255h1v7h-1zM447 259h1v2h-1zM448 259h1v2h-1zM449 257h1v3h-1zM450 257h1v2h-1zM451 255h1v6h-1zM452 258h1v6h-1zM453 253h1v11h-1zM454 254h1v5h-1zM455 250h1v5h-1zM456 252h1v5h-1zM457 255h1v2h-1zM458 256h1v3h-1zM459 256h1v3h-1zM460 254h1v4h-1zM461 251h1v8h-1zM462 255h1v3h-1zM463 250h1v13h-1zM464 250h1v7h-1zM465 252h1v4h-1zM466 252h1v3h-1zM467 251h1v6h-1zM468 254h1v6h-1zM469 254h1v9h-1zM470 251h1v9h-1zM471 253h1v5h-1zM472 250h1v4h-1zM473 253h1v4h-1zM474 254h1v6h-1zM475 253h1v7h-1zM476 254h1v2h-1zM477 254h1v2h-1zM478 252h1v4h-1zM479 251h1v5h-1zM480 251h1v3h-1zM481 252h1v3h-1zM482 254h1v5h-1zM483 250h1v7h-1zM484 250h1v4h-1zM485 251h1v3h-1zM486 255h1v6h-1zM487 253h1v6h-1zM488 252h1v2h-1zM489 253h1v4h-1zM490 251h1v5h-1zM491 252h1v3h-1zM492 254h1v2h-1zM493 248h1v5h-1zM494 249h1v3h-1zM495 248h1v3h-1zM496 246h1v7h-1zM497 248h1v7h-1zM498 252h1v2h-1zM499 250h1v2h-1zM500 248h1v4h-1zM501 249h1v4h-1zM502 249h1v3h-1zM503 246h1v5h-1zM504 248h1v5h-1zM505 242h1v9h-1zM506 243h1v3h-1zM507 245h1v4h-1zM508 246h1v5h-1zM509 244h1v4h-1zM510 245h1v5h-1zM511 238h1v9h-1zM512 236h1v11h-1zM513 247h1v2h-1zM514 244h1v6h-1zM515 250h1v2h-1zM516 248h1v3h-1z" fill="#ff00ff"/>
</svg>
<span class="t ttl" id="t0" style="top:8.84px;font-size:12px;font-weight:bold;left:6.52px;letter-spacing:1.02px"><span>CD Speed : Disc Quality Test - BENQ</span></span>
<span class="t ttl" id="t1" style="top:8.84px;font-size:12px;font-weight:bold;left:272.52px;letter-spacing:0.70px"><span>DVD DD DW1620</span></span>
<span class="t ttl" id="t2" style="top:8.84px;font-size:12px;font-weight:bold;left:399.08px;letter-spacing:0.53px"><span>B7S9</span></span>
<span class="t " id="t3" style="top:37.82px;left:21.58px;transform:scaleX(1.012);transform-origin:0 0"><span>Disc Quality</span></span>
<span class="t " id="t4" style="top:56.62px;left:267.58px"><span>recorded with PIONEER DVD-RW  DVR-108  v1.18</span></span>
<span class="t " id="t5" style="top:66.42px;right:689.00px;transform:scaleX(0.907);transform-origin:100% 0"><span>2000</span></span>
<span class="t " id="t6" style="top:92.62px;right:689.00px;transform:scaleX(0.907);transform-origin:100% 0"><span>1600</span></span>
<span class="t " id="t7" style="top:118.82px;right:689.00px;transform:scaleX(0.907);transform-origin:100% 0"><span>1200</span></span>
<span class="t " id="t8" style="top:145.02px;right:689.00px;transform:scaleX(0.920);transform-origin:100% 0"><span>800</span></span>
<span class="t " id="t9" style="top:171.22px;right:689.00px;transform:scaleX(0.920);transform-origin:100% 0"><span>400</span></span>
<span class="t " id="t10" style="top:216.42px;right:689.00px;transform:scaleX(0.915);transform-origin:100% 0"><span>500</span></span>
<span class="t " id="t11" style="top:242.62px;right:689.00px;transform:scaleX(0.915);transform-origin:100% 0"><span>400</span></span>
<span class="t " id="t12" style="top:268.82px;right:689.00px;transform:scaleX(0.915);transform-origin:100% 0"><span>300</span></span>
<span class="t " id="t13" style="top:295.02px;right:689.00px;transform:scaleX(0.915);transform-origin:100% 0"><span>200</span></span>
<span class="t " id="t14" style="top:321.22px;right:689.00px;transform:scaleX(0.964);transform-origin:100% 0"><span>100</span></span>
<span class="t " id="t15" style="top:66.42px;left:532.12px;transform:scaleX(0.955);transform-origin:0 0"><span>16</span></span>
<span class="t " id="t16" style="top:82.79px;left:532.12px;transform:scaleX(0.955);transform-origin:0 0"><span>14</span></span>
<span class="t " id="t17" style="top:99.17px;left:532.12px;transform:scaleX(0.955);transform-origin:0 0"><span>12</span></span>
<span class="t " id="t18" style="top:115.54px;left:532.12px;transform:scaleX(0.955);transform-origin:0 0"><span>10</span></span>
<span class="t " id="t19" style="top:131.92px;left:533.02px;transform:scaleX(0.913);transform-origin:0 0"><span>8</span></span>
<span class="t " id="t20" style="top:148.29px;left:533.02px;transform:scaleX(0.890);transform-origin:0 0"><span>6</span></span>
<span class="t " id="t21" style="top:164.67px;left:533.02px;transform:scaleX(0.913);transform-origin:0 0"><span>4</span></span>
<span class="t " id="t22" style="top:181.04px;left:533.02px;transform:scaleX(0.890);transform-origin:0 0"><span>2</span></span>
<span class="t " id="t23" style="top:216.42px;left:533.02px;transform:scaleX(0.889);transform-origin:0 0"><span>20</span></span>
<span class="t " id="t24" style="top:242.62px;left:532.12px;transform:scaleX(0.955);transform-origin:0 0"><span>16</span></span>
<span class="t " id="t25" style="top:268.82px;left:532.12px;transform:scaleX(0.955);transform-origin:0 0"><span>12</span></span>
<span class="t " id="t26" style="top:295.02px;left:533.02px;transform:scaleX(0.913);transform-origin:0 0"><span>8</span></span>
<span class="t " id="t27" style="top:321.22px;left:533.02px;transform:scaleX(0.913);transform-origin:0 0"><span>4</span></span>
<span class="t " id="t28" style="top:205.62px;left:-36.51px;width:200px;text-align:center;transform:scaleX(0.874);transform-origin:50% 0"><span>0.0</span></span>
<span class="t " id="t29" style="top:355.62px;left:-36.51px;width:200px;text-align:center;transform:scaleX(0.874);transform-origin:50% 0"><span>0.0</span></span>
<span class="t " id="t30" style="top:205.62px;left:15.49px;width:200px;text-align:center;transform:scaleX(0.874);transform-origin:50% 0"><span>0.5</span></span>
<span class="t " id="t31" style="top:355.62px;left:15.49px;width:200px;text-align:center;transform:scaleX(0.874);transform-origin:50% 0"><span>0.5</span></span>
<span class="t " id="t32" style="top:205.62px;left:66.59px;width:200px;text-align:center;transform:scaleX(0.869);transform-origin:50% 0"><span>1.0</span></span>
<span class="t " id="t33" style="top:355.62px;left:66.59px;width:200px;text-align:center;transform:scaleX(0.869);transform-origin:50% 0"><span>1.0</span></span>
<span class="t " id="t34" style="top:205.62px;left:118.59px;width:200px;text-align:center;transform:scaleX(0.869);transform-origin:50% 0"><span>1.5</span></span>
<span class="t " id="t35" style="top:355.62px;left:118.59px;width:200px;text-align:center;transform:scaleX(0.869);transform-origin:50% 0"><span>1.5</span></span>
<span class="t " id="t36" style="top:205.62px;left:171.49px;width:200px;text-align:center;transform:scaleX(0.874);transform-origin:50% 0"><span>2.0</span></span>
<span class="t " id="t37" style="top:355.62px;left:171.49px;width:200px;text-align:center;transform:scaleX(0.874);transform-origin:50% 0"><span>2.0</span></span>
<span class="t " id="t38" style="top:205.62px;left:223.49px;width:200px;text-align:center;transform:scaleX(0.874);transform-origin:50% 0"><span>2.5</span></span>
<span class="t " id="t39" style="top:355.62px;left:223.49px;width:200px;text-align:center;transform:scaleX(0.874);transform-origin:50% 0"><span>2.5</span></span>
<span class="t " id="t40" style="top:205.62px;left:275.49px;width:200px;text-align:center;transform:scaleX(0.874);transform-origin:50% 0"><span>3.0</span></span>
<span class="t " id="t41" style="top:355.62px;left:275.49px;width:200px;text-align:center;transform:scaleX(0.874);transform-origin:50% 0"><span>3.0</span></span>
<span class="t " id="t42" style="top:205.62px;left:327.49px;width:200px;text-align:center;transform:scaleX(0.874);transform-origin:50% 0"><span>3.5</span></span>
<span class="t " id="t43" style="top:355.62px;left:327.49px;width:200px;text-align:center;transform:scaleX(0.874);transform-origin:50% 0"><span>3.5</span></span>
<span class="t " id="t44" style="top:205.62px;left:379.94px;width:200px;text-align:center;transform:scaleX(0.820);transform-origin:50% 0"><span>4.0</span></span>
<span class="t " id="t45" style="top:355.62px;left:379.94px;width:200px;text-align:center;transform:scaleX(0.820);transform-origin:50% 0"><span>4.0</span></span>
<span class="t " id="t46" style="top:205.62px;left:430.90px;width:200px;text-align:center;transform:scaleX(0.820);transform-origin:50% 0"><span>4.5</span></span>
<span class="t " id="t47" style="top:355.62px;left:430.90px;width:200px;text-align:center;transform:scaleX(0.820);transform-origin:50% 0"><span>4.5</span></span>
<span class="t " id="t48" style="top:60.94px;font-size:12px;left:583.12px;transform:scaleX(1.032);transform-origin:0 0"><span>開始</span></span>
<span class="t " id="t49" style="top:59.94px;font-size:12px;left:668.02px;transform:scaleX(0.940);transform-origin:0 0"><span>終了(<u>X</u>)</span></span>
<span class="t " id="t50" style="top:85.44px;font-size:12px;color:#0018e6;left:568.56px;transform:scaleX(0.820);transform-origin:0 0"><span>ディスク情報</span></span>
<span class="t " id="t51" style="top:100.44px;font-size:12px;left:568.58px;transform:scaleX(0.727);transform-origin:0 0"><span>タイプ:</span></span>
<span class="t " id="t52" style="top:100.02px;color:#000074;left:617.10px;transform:scaleX(0.991);transform-origin:0 0"><span>DVD+R</span></span>
<span class="t " id="t53" style="top:115.02px;left:568.58px;transform:scaleX(0.903);transform-origin:0 0"><span>ID:</span></span>
<span class="t " id="t54" style="top:115.02px;color:#000074;left:617.10px;transform:scaleX(0.947);transform-origin:0 0"><span>RICOHJPN R01</span></span>
<span class="t " id="t55" style="top:130.44px;font-size:12px;left:567.68px;transform:scaleX(1.029);transform-origin:0 0"><span>日付:</span></span>
<span class="t " id="t56" style="top:130.02px;color:#000074;left:617.10px;transform:scaleX(0.978);transform-origin:0 0"><span>10 February 2005</span></span>
<span class="t " id="t57" style="top:144.62px;left:568.58px;transform:scaleX(0.946);transform-origin:0 0"><span>Label:</span></span>
<span class="t " id="t58" style="top:144.62px;color:#000074;left:618.00px;transform:scaleX(0.892);transform-origin:0 0"><span>CDS_TEST_B2</span></span>
<span class="t " id="t59" style="top:165.82px;color:#0018e6;left:569.96px"><span>Settings</span></span>
<span class="t " id="t60" style="top:186.94px;font-size:12px;left:569.00px;transform:scaleX(0.989);transform-origin:0 0"><span>転送速度</span></span>
<span class="t " id="t61" style="top:188.44px;font-size:12px;left:634.08px;transform:scaleX(1.032);transform-origin:0 0"><span>最大</span></span>
<span class="t " id="t62" style="top:212.94px;font-size:12px;left:568.10px"><span>開始</span></span>
<span class="t " id="t63" style="top:210.92px;left:633.00px;transform:scaleX(0.988);transform-origin:0 0"><span>0000 MB</span></span>
<span class="t " id="t64" style="top:235.44px;font-size:12px;left:569.00px;transform:scaleX(0.989);transform-origin:0 0"><span>終了位置</span></span>
<span class="t " id="t65" style="top:233.62px;left:633.00px;transform:scaleX(0.988);transform-origin:0 0"><span>4482 MB</span></span>
<span class="t " id="t66" style="top:254.92px;left:584.96px;transform:scaleX(0.984);transform-origin:0 0"><span>Show C1/PIE</span></span>
<span class="t " id="t67" style="top:271.52px;left:584.96px;transform:scaleX(0.979);transform-origin:0 0"><span>Show C2/PIF</span></span>
<span class="t " id="t68" style="top:287.82px;left:584.96px;transform:scaleX(1.022);transform-origin:0 0"><span>Show Jitter</span></span>
<span class="t " id="t69" style="top:304.32px;left:584.96px;transform:scaleX(0.957);transform-origin:0 0"><span>Show Read Speed</span></span>
<span class="t " id="t70" style="top:320.62px;left:584.96px;transform:scaleX(0.966);transform-origin:0 0"><span>Show Write Speed</span></span>
<span class="t " id="t71" style="top:348.94px;font-size:12px;left:567.64px;transform:scaleX(0.841);transform-origin:0 0"><span>品質スコア:</span></span>
<span class="t " id="t72" style="top:349.02px;color:#000074;right:36.56px;transform:scaleX(0.980);transform-origin:100% 0"><span>0</span></span>
<span class="t " id="t73" style="top:380.94px;font-size:12px;left:568.54px;transform:scaleX(0.986);transform-origin:0 0"><span>進行状況:</span></span>
<span class="t " id="t74" style="top:400.94px;font-size:12px;left:567.64px;transform:scaleX(0.757);transform-origin:0 0"><span>ポジション:</span></span>
<span class="t " id="t75" style="top:418.94px;font-size:12px;left:568.54px;transform:scaleX(0.994);transform-origin:0 0"><span>速度:</span></span>
<span class="t " id="t76" style="top:380.82px;color:#000074;left:678.08px;transform:scaleX(0.938);transform-origin:0 0"><span>100 %</span></span>
<span class="t " id="t77" style="top:399.72px;color:#000074;left:661.52px;transform:scaleX(0.960);transform-origin:0 0"><span>4481 MB</span></span>
<span class="t " id="t78" style="top:417.92px;color:#000074;left:676.04px;transform:scaleX(0.957);transform-origin:0 0"><span>8.34 X</span></span>
<span class="t " id="t79" style="top:366.92px;left:39.62px;transform:scaleX(0.976);transform-origin:0 0"><span>PI Errors</span></span>
<span class="t " id="t80" style="top:366.92px;left:219.62px;transform:scaleX(0.981);transform-origin:0 0"><span>PI Failures</span></span>
<span class="t " id="t81" style="top:366.92px;left:402.00px;transform:scaleX(1.044);transform-origin:0 0"><span>Jitter</span></span>
<span class="t " id="t82" style="top:382.44px;font-size:12px;left:26.98px;transform:scaleX(0.966);transform-origin:0 0"><span>平均:</span></span>
<span class="t " id="t83" style="top:400.44px;font-size:12px;left:26.08px"><span>最大:</span></span>
<span class="t " id="t84" style="top:417.44px;font-size:12px;left:26.08px;transform:scaleX(1.013);transform-origin:0 0"><span>合計 :</span></span>
<span class="t " id="t85" style="top:382.44px;font-size:12px;left:208.96px;transform:scaleX(0.966);transform-origin:0 0"><span>平均:</span></span>
<span class="t " id="t86" style="top:400.44px;font-size:12px;left:207.16px"><span>最大:</span></span>
<span class="t " id="t87" style="top:417.44px;font-size:12px;left:207.16px;transform:scaleX(1.013);transform-origin:0 0"><span>合計 :</span></span>
<span class="t " id="t88" style="top:382.44px;font-size:12px;left:389.04px;transform:scaleX(0.966);transform-origin:0 0"><span>平均:</span></span>
<span class="t " id="t89" style="top:400.44px;font-size:12px;left:388.14px"><span>最大:</span></span>
<span class="t " id="t90" style="top:381.62px;color:#000074;left:149.04px;transform:scaleX(0.846);transform-origin:0 0"><span>87.61</span></span>
<span class="t " id="t91" style="top:400.12px;color:#000074;left:150.12px;transform:scaleX(0.929);transform-origin:0 0"><span>1017</span></span>
<span class="t " id="t92" style="top:418.12px;color:#000074;left:133.10px;transform:scaleX(0.955);transform-origin:0 0"><span>1373586</span></span>
<span class="t " id="t93" style="top:381.62px;color:#000074;left:337.98px;transform:scaleX(0.869);transform-origin:0 0"><span>5.95</span></span>
<span class="t " id="t94" style="top:400.12px;color:#000074;left:338.98px;transform:scaleX(0.888);transform-origin:0 0"><span>276</span></span>
<span class="t " id="t95" style="top:418.12px;color:#000074;left:328.46px;transform:scaleX(0.933);transform-origin:0 0"><span>85327</span></span>
<span class="t " id="t96" style="top:381.62px;color:#000074;left:500.62px;transform:scaleX(0.921);transform-origin:0 0"><span>11.77 %</span></span>
<span class="t " id="t97" style="top:400.12px;color:#000074;left:507.56px;transform:scaleX(0.892);transform-origin:0 0"><span>17.9 %</span></span>
<span class="t " id="t98" style="top:422.42px;left:389.10px;transform:scaleX(0.977);transform-origin:0 0"><span>PO Failures:</span></span>
<span class="t " id="t99" style="top:422.42px;color:#000074;left:513.52px;transform:scaleX(0.856);transform-origin:0 0"><span>9761</span></span>

</body></html>
